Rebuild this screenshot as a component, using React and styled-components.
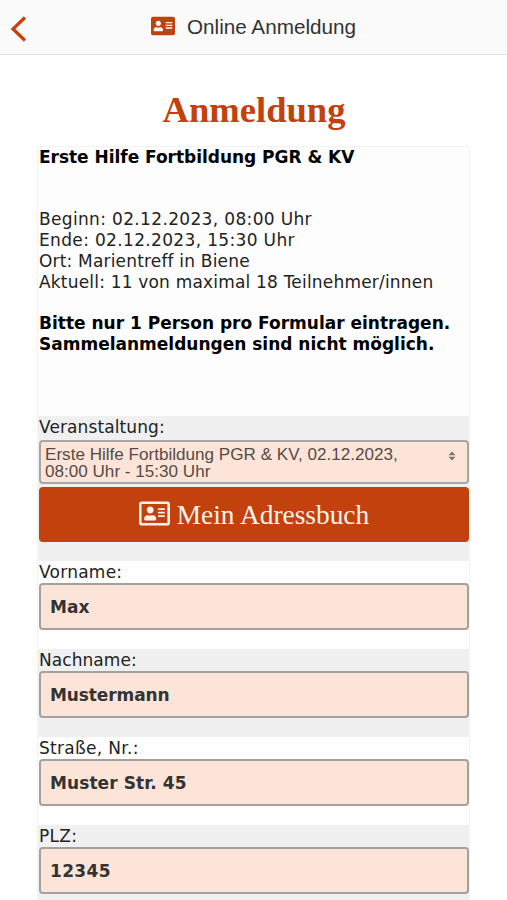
import React, { useState } from "react";
import styled, { createGlobalStyle } from "styled-components";
import { FaAddressCard, FaRegAddressCard } from "react-icons/fa";

const GlobalStyle = createGlobalStyle`
  * {
    box-sizing: border-box;
  }

  body {
    margin: 0;
    background-color: #fff;
    font-family: "DejaVu Sans", sans-serif;
  }
`;

const Screen = styled.div`
  display: flex;
  flex-direction: column;
  height: 100vh;
  overflow: hidden;
`;

const Header = styled.header`
  display: grid;
  flex-shrink: 0;
  grid-template-columns: 60px 1fr 60px;
  align-items: center;
  height: 55px;
  background-color: #fafafa;
  border-bottom: 1px solid #e2e2e2;
`;

const BackButton = styled.button`
  display: flex;
  padding: 3px 0 0 10px;
  border: none;
  background: none;
  cursor: pointer;
`;

const HeaderTitle = styled.div`
  display: flex;
  justify-content: center;
  align-items: center;
  gap: 12px;
  color: #333;
  font-family: "Liberation Sans", sans-serif;
  font-size: 20.7px;
  line-height: 28px;

  svg {
    margin-bottom: 2px;
    color: #c2410c;
    font-size: 24px;
  }
`;

const Page = styled.main`
  flex: 1;
  min-height: 0;
  padding: 35px 37px 0;
  overflow: hidden;
`;

const PageTitle = styled.h1`
  margin: 0 0 16px;
  padding-left: 1px;
  color: #c2410c;
  font-family: "Liberation Serif", serif;
  font-size: 36.6px;
  font-weight: 700;
  line-height: 40px;
  text-align: center;
`;

const Form = styled.form`
  border: 1px solid #f3f3f3;
`;

const Info = styled.section`
  height: 269px;
  padding-left: 1px;
  background-color: #fdfdfd;
`;

const Line = styled.p`
  margin: 0;
  height: 20.8px;
  color: ${(props) => (props.$bold ? "#000" : "#222")};
  font-size: 17px;
  font-weight: ${(props) => (props.$bold ? 700 : 400)};
  line-height: 20.8px;
  letter-spacing: ${(props) => props.$spacing || 0}px;
  white-space: pre;
`;

const Row = styled.div`
  height: ${(props) => props.$height || 88}px;
  padding-left: 1px;
  background-color: ${(props) => (props.$shaded ? "#f0f0f0" : "#fefefe")};
`;

const Label = styled.label`
  display: block;
  height: ${(props) => props.$height || 22}px;
  color: #222;
  font-size: 17px;
  line-height: 23px;
  letter-spacing: ${(props) => props.$spacing || 0}px;
`;

const InputField = styled.input`
  display: block;
  width: 100%;
  height: 47px;
  padding: 0 10px 0 9px;
  border: 2px solid #a3a19f;
  border-radius: 4px;
  outline: none;
  background-color: #fde4d8;
  color: #333;
  font-family: "DejaVu Sans", sans-serif;
  font-size: 17px;
  font-weight: 700;
  letter-spacing: ${(props) => props.$spacing || 0}px;
`;

const SelectField = styled.div`
  display: flex;
  justify-content: space-between;
  height: 44px;
  padding: 4px 11px 0 4px;
  border: 2px solid #a8a6a4;
  border-radius: 4px;
  background-color: #fde4d8;
  color: #554b46;
  font-family: "Liberation Sans", sans-serif;
  font-size: 17.1px;
  line-height: 17px;
`;

const SelectArrows = styled.svg`
  margin-top: 5px;
`;

const AddressButton = styled.button`
  display: flex;
  justify-content: center;
  align-items: center;
  gap: 7px;
  width: 100%;
  height: 55px;
  margin-top: 3px;
  padding: 1px 0 0;
  border: none;
  border-radius: 4px;
  background-color: #c2410c;
  color: #fff3ea;
  font-family: "Liberation Serif", serif;
  font-size: 27.4px;
  cursor: pointer;

  svg {
    margin-bottom: 3px;
  }
`;

const fields = [
  { label: "Vorname:", value: "Max", labelSpacing: 0.25, spacing: 0 },
  { label: "Nachname:", value: "Mustermann", labelSpacing: 0.06, spacing: -0.1 },
  { label: "Straße, Nr.:", value: "Muster Str. 45", labelSpacing: 0.3, spacing: 0.08 },
  { label: "PLZ:", value: "12345", labelSpacing: 0.3, spacing: 0.35 },
];

function App() {
  const [values, setValues] = useState(fields.map((field) => field.value));

  const changeValue = (index, value) => {
    setValues((prev) => prev.map((old, i) => (i === index ? value : old)));
  };

  return (
    <Screen>
      <GlobalStyle />
      <Header>
        <BackButton type="button" aria-label="Zurück">
          <svg width="17" height="26" viewBox="0 0 17 26" fill="none">
            <path d="M15 1.5 3 13l12 11.5" stroke="#c2410c" strokeWidth="3.2" />
          </svg>
        </BackButton>
        <HeaderTitle>
          <FaAddressCard />
          <span>Online Anmeldung</span>
        </HeaderTitle>
      </Header>
      <Page>
        <PageTitle>Anmeldung</PageTitle>
        <Form>
          <Info>
            <Line $bold $spacing={-0.03}>
              Erste Hilfe Fortbildung PGR &amp; KV
            </Line>
            <Line />
            <Line />
            <Line $spacing={0.34}>Beginn: 02.12.2023, 08:00 Uhr</Line>
            <Line $spacing={0.34}>Ende: 02.12.2023, 15:30 Uhr</Line>
            <Line $spacing={0.18}>Ort: Marientreff in Biene</Line>
            <Line $spacing={0.19}>Aktuell: 11 von maximal 18 Teilnehmer/innen</Line>
            <Line />
            <Line $bold>Bitte nur 1 Person pro Formular eintragen.</Line>
            <Line $bold>Sammelanmeldungen sind nicht möglich.</Line>
          </Info>
          <Row $shaded $height={145}>
            <Label $height={24} $spacing={0.1}>
              Veranstaltung:
            </Label>
            <SelectField>
              <span>
                Erste Hilfe Fortbildung PGR &amp; KV, 02.12.2023,
                <br />
                08:00 Uhr - 15:30 Uhr
              </span>
              <SelectArrows width="8" height="10" viewBox="0 0 8 10">
                <path d="M4 0.5 7.5 4.3h-7zM4 9.5 7.5 5.7h-7z" fill="#777" />
              </SelectArrows>
            </SelectField>
            <AddressButton type="button">
              <FaRegAddressCard size={31} />
              Mein Adressbuch
            </AddressButton>
          </Row>
          {fields.map((field, index) => (
            <Row key={field.label} $shaded={index % 2 === 1}>
              <Label $spacing={field.labelSpacing}>{field.label}</Label>
              <InputField
                type="text"
                value={values[index]}
                $spacing={field.spacing}
                onChange={(e) => changeValue(index, e.target.value)}
              />
            </Row>
          ))}
        </Form>
      </Page>
    </Screen>
  );
}

export default App;
